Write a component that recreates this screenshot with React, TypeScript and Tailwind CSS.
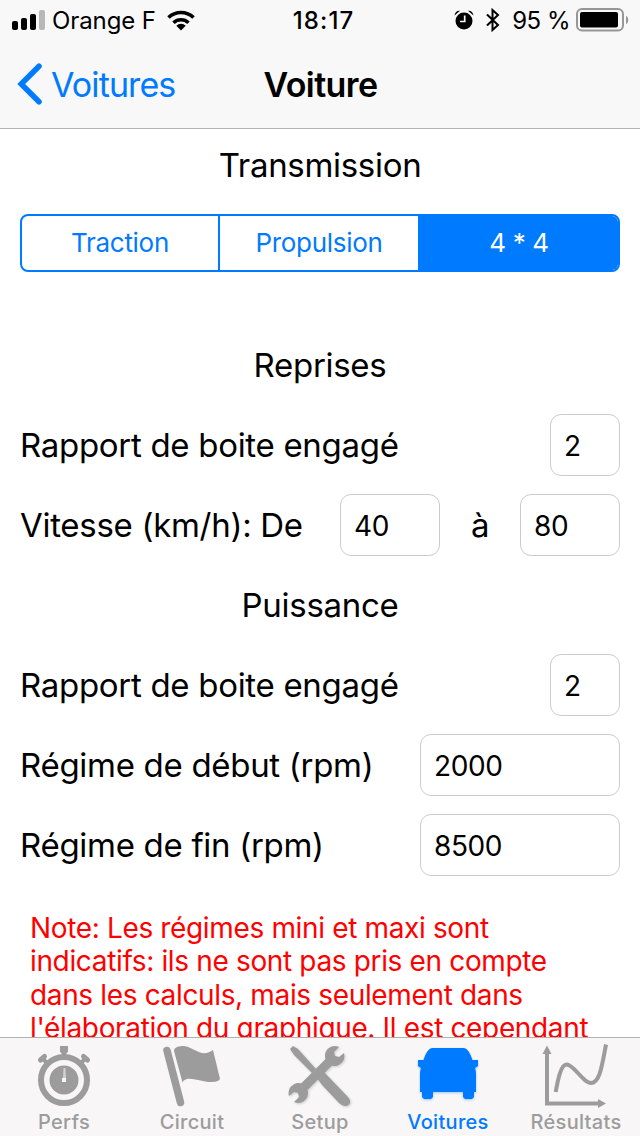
import React, { useState } from 'react';
import clsx from 'clsx';

type Tab = {
    id: string;
    label: string;
    icon: React.ReactNode;
};

const TRANSMISSIONS = ['Traction', 'Propulsion', '4 * 4'];

const StopwatchIcon = () => (
    <svg width="64" height="64" viewBox="0 0 64 64" fill="currentColor">
        <path d="M28 2h8v6l-1.500 1v4h-5V9L28 8z" />
        <circle cx="32" cy="36" r="23" fill="none" stroke="currentColor" strokeWidth="6" />
        <circle cx="32" cy="36" r="14.500" />
        <path d="M10 14l7 7M54 14l-7 7" stroke="currentColor" strokeWidth="4" />
        <path d="M8.500 16l4-3.500M55.500 16l-4-3.500" stroke="currentColor" strokeWidth="5" strokeLinecap="round" />
        <path d="M31.500 24h2l.500 10h-3z" fill="#d0d0d0" />
        <path d="M30 34h4v4h-4z" fill="#f8f7f7" />
    </svg>
);

const FlagIcon = () => (
    <svg width="64" height="64" viewBox="0 0 64 64" fill="currentColor">
        <path d="M7 6.500l13.500 52" stroke="currentColor" strokeWidth="7.500" strokeLinecap="round" />
        <path d="M14 7c0-4 5-5 10-5 7 1 11 5 18 7 4 1 8-1 11-3l7 29c-2 3-6 3-12 3-8-1-15-4-21-3-3 1-4 2-4.500 3.500z" />
    </svg>
);

const ToolsIcon = () => (
    <svg width="64" height="64" viewBox="0 0 64 64" fill="currentColor" className="drop-shadow-[1px_1px_1px_#cccccc]">
        <path d="M2 5l3-3 5 3 18 20-4 4L6 11z" />
        <path d="M29 34l7-6 23 24c4 4 4 7 1.500 9-3 2-6 1-9.500-2L34 41z" />
        <path d="M45 14L12 47" stroke="currentColor" strokeWidth="9" />
        <path d="M51 3c-7-3-14 2-14 9 0 8 9 13 15 8 4-2 5-7 4-11l-5 4-4-1-1-4z" />
        <path d="M6 58c7 3 14-2 14-9 0-8-9-13-15-8-4 2-5 7-4 11l5-4 4 1 1 4z" />
    </svg>
);

const CarIcon = () => (
    <svg width="64" height="64" viewBox="0 0 64 64" fill="currentColor" className="drop-shadow-[0_1px_1px_#9cc8f8]">
        <path d="M16 4h32c4 1 6 5 8.500 12H62v6l-3 2c.800 2 1 4 1 7v17h-2v5l-2 2h-7l-2-2v-5H17v5l-2 2H8l-2-2v-5H4V31c0-3 .200-5 1-7l-3-2v-6h5.500C10 9 12 5 16 4z" />
    </svg>
);

const CurveIcon = () => (
    <svg width="64" height="64" viewBox="0 0 64 64" fill="none" stroke="currentColor" className="overflow-visible">
        <path d="M3 7v52.500h53" strokeWidth="4" />
        <path d="M3 1.500l4.500 8.500h-9zM62 59.500L54 55v9z" fill="currentColor" stroke="none" />
        <path d="M11.700 48C14 35 17 20.500 22.500 20.500 30 20.500 39 39 47 39 56 39 58 21 62 .500" strokeWidth="4" />
    </svg>
);

const TABS: Tab[] = [
    { id: 'perfs', label: 'Perfs', icon: <StopwatchIcon /> },
    { id: 'circuit', label: 'Circuit', icon: <FlagIcon /> },
    { id: 'setup', label: 'Setup', icon: <ToolsIcon /> },
    { id: 'voitures', label: 'Voitures', icon: <CarIcon /> },
    { id: 'resultats', label: 'Résultats', icon: <CurveIcon /> },
];

function StatusBar() {
    return (
        <div className="grid h-10 grid-cols-[1fr_auto_1fr] items-center px-3 text-[24px] leading-none">
            <div className="flex items-center">
                <svg width="33" height="20" viewBox="0 0 33 20">
                    <rect x="0" y="11" width="6" height="9" rx="2" />
                    <rect x="9" y="8" width="6" height="12" rx="2" />
                    <rect x="18" y="4" width="6" height="16" rx="2" />
                    <rect x="27" y="0" width="6" height="20" rx="2" fill="#b8b8b8" />
                </svg>
                <span className="ml-[7px] pt-[2px] tracking-[-0.1px]">Orange F</span>
                <svg className="ml-[11px]" width="28" height="21" viewBox="0 0 28 21">
                    <path d="M1.500 7.500a18 18 0 0 1 25 0M6.500 12.700a11 11 0 0 1 15 0" fill="none" stroke="black" strokeWidth="3.600" />
                    <path d="M14 20.500l-4.700-4.700a6.700 6.700 0 0 1 9.400 0z" />
                </svg>
            </div>
            <div className="pl-[7px] pt-[2px] font-medium tracking-[1.1px]">18:17</div>
            <div className="flex items-center justify-end">
                <svg width="20" height="20" viewBox="0 0 20 20">
                    <circle cx="10" cy="11" r="8.500" />
                    <path d="M.500 5.500C1 2 3 .500 6 .800zM19.500 5.500C19 2 17 .500 14 .800z" />
                    <path d="M10.700 5.500v6H6" fill="none" stroke="#f9f9f9" strokeWidth="1.700" />
                </svg>
                <svg className="ml-3" width="14" height="24" viewBox="0 0 14 24" fill="none" stroke="black" strokeWidth="2">
                    <path d="M1 6.500l11 10.500-5.500 5V2L12 7 1 17.500" />
                </svg>
                <span className="ml-3 pt-[2px] tracking-[-0.5px]">95 %</span>
                <svg className="ml-[6px] -mr-[1px]" width="53" height="24" viewBox="0 0 53 24">
                    <rect x="1" y="1" width="46" height="21.500" rx="5" fill="none" stroke="#979797" strokeWidth="2" />
                    <rect x="4" y="4" width="38" height="15.500" rx="2" />
                    <path d="M50 8c3 1 3 7 0 8z" fill="#979797" />
                </svg>
            </div>
        </div>
    );
}

function NavBar() {
    return (
        <div className="grid h-[88px] grid-cols-[1fr_auto_1fr] items-center px-[17px] text-[34px]">
            <button className="flex items-center text-[#007aff]">
                <svg width="26" height="42" viewBox="0 0 26 42" fill="none" stroke="currentColor" strokeWidth="5.500" strokeLinecap="round" strokeLinejoin="miter">
                    <path d="M22 3.200L4.200 21 22 38.800" />
                </svg>
                <span className="ml-[8px] tracking-[-0.9px]">Voitures</span>
            </button>
            <h1 className="pl-px font-semibold tracking-[-0.600px]">Voiture</h1>
        </div>
    );
}

function Field({ value, className }: { value: string; className: string }) {
    const [text, setText] = useState(value);
    return (
        <input
            className={clsx('h-[62px] rounded-[11px] border border-[#cccccc] bg-white pl-[13px] pt-px text-[28px] tracking-[-0.4px] outline-none', className)}
            value={text}
            onChange={e => setText(e.target.value)}
        />
    );
}

export default function App() {
    const [transmission, setTransmission] = useState('4 * 4');
    const [activeTab, setActiveTab] = useState('voitures');

    return (
        <div className="flex h-[1136px] w-[640px] flex-col overflow-hidden bg-white font-['Inter',sans-serif] text-black [font-feature-settings:'calt'_0]">
            <header className="h-[129px] shrink-0 border-b border-[#b2b2b2] bg-[#f8f8f8]">
                <StatusBar />
                <NavBar />
            </header>

            <main className="min-h-0 flex-1 overflow-hidden px-5 text-[33px] tracking-[-0.3px]">
                <h2 className="flex h-[72px] items-center justify-center pt-[2px]">Transmission</h2>
                <div className="mb-[53px] mt-[13px] grid h-[58px] grid-cols-[198px_200px_1fr] divide-x-2 divide-[#007aff] overflow-hidden rounded-lg border-2 border-[#007aff] bg-white text-[26px]">
                    {TRANSMISSIONS.map(name => (
                        <button
                            key={name}
                            onClick={() => setTransmission(name)}
                            className={clsx('pb-[2px]', transmission === name ? 'bg-[#007aff] text-white' : 'text-[#007aff]')}
                        >
                            {name}
                        </button>
                    ))}
                </div>

                <h2 className="flex h-20 items-center justify-center pt-[2px]">Reprises</h2>
                <div className="flex h-20 items-center justify-between">
                    <span className="pt-[2px]">Rapport de boite engagé</span>
                    <Field value="2" className="w-[70px]" />
                </div>
                <div className="flex h-20 items-center">
                    <span className="w-[320px] pt-[2px]">Vitesse (km/h): De</span>
                    <Field value="40" className="w-[100px]" />
                    <span className="flex-1 pt-[2px] text-center">à</span>
                    <Field value="80" className="w-[100px]" />
                </div>

                <h2 className="flex h-20 items-center justify-center pt-[2px]">Puissance</h2>
                <div className="flex h-20 items-center justify-between">
                    <span className="pt-[2px]">Rapport de boite engagé</span>
                    <Field value="2" className="w-[70px]" />
                </div>
                <div className="flex h-20 items-center justify-between">
                    <span className="pt-[2px]">Régime de début (rpm)</span>
                    <Field value="2000" className="w-[200px]" />
                </div>
                <div className="flex h-20 items-center justify-between">
                    <span className="pt-[2px]">Régime de fin (rpm)</span>
                    <Field value="8500" className="w-[200px]" />
                </div>

                <p className="mt-[26.5px] whitespace-nowrap px-[10px] text-[28px] leading-[33.500px] tracking-[-0.35px] text-[#ff0000]">
                    Note: Les régimes mini et maxi sont<br />
                    indicatifs: ils ne sont pas pris en compte<br />
                    dans les calculs, mais seulement dans<br />
                    l'élaboration du graphique. Il est cependant
                </p>
            </main>

            <nav className="flex h-[99px] shrink-0 border-t border-[#b2b2b2] bg-[#f8f6f6]">
                {TABS.map(tab => (
                    <button
                        key={tab.id}
                        onClick={() => setActiveTab(tab.id)}
                        className={clsx(
                            'flex flex-1 flex-col items-center pt-[6px] text-[20px] font-medium tracking-[0.3px]',
                            activeTab === tab.id ? 'text-[#007aff]' : 'text-[#9c9c9c]'
                        )}
                    >
                        {tab.icon}
                        <span className="leading-[28px]">{tab.label}</span>
                    </button>
                ))}
            </nav>
        </div>
    );
}
